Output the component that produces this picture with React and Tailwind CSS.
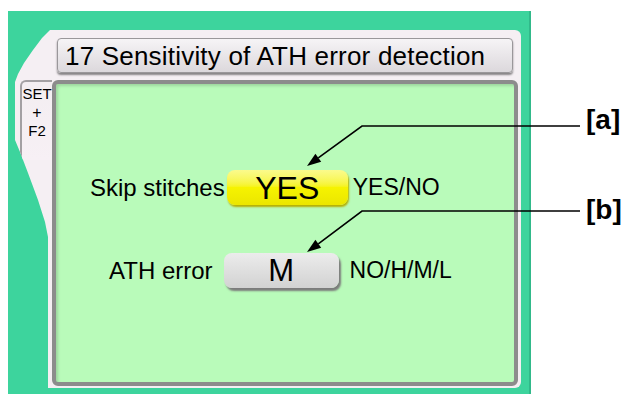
export default function App() {
  return (
    <div className="relative w-[629px] h-[394px] overflow-hidden bg-white pt-[11px] pl-[8px] font-['Liberation_Sans',Arial,sans-serif] text-black">
      {/* teal frame */}
      <div className="flex w-[523px] h-[383px] bg-[#3dd49d] border-r-2 border-[#31b98a] pt-[19px] pl-[7px]">
        {/* left tab */}
        <div className="flex flex-col w-[37px] h-[358px] bg-[#f5eff3] pt-[50px] pl-[5px] [clip-path:polygon(35px_0,37px_0,37px_358px,33px_358px,33px_207px,30px_192px,23px_170px,13px_143px,5px_122px,0_110px,0_52px,3px_44px,9px_33px,18px_20px,27px_8px)]">
          <div className="flex flex-col items-center w-[32px] h-[80px] border-l-2 border-t-2 border-[#a3a0a3] rounded-tl-[6px] pt-[3px] bg-gradient-to-b from-[#f3eef1] to-[#f7f0f5]">
            <span className="text-[15px] leading-[18px]">SET</span>
            <span className="text-[16px] leading-[19px]">+</span>
            <span className="text-[15px] leading-[18px]">F2</span>
          </div>
        </div>

        {/* main panel */}
        <div className="flex flex-col w-[469px] h-[358px] bg-[#f5eff3] rounded-tr-[6px] rounded-br-[6px] pt-[8px]">
          <div className="flex items-center ml-[5px] w-[456px] h-[35px] pl-[7px] rounded-[4px] border border-[#9a979a] bg-gradient-to-b from-[#f6f4f6] to-[#dcd8dc] shadow-[0_2px_2px_rgba(0,0,0,0.45)]">
            <span className="text-[26px] tracking-[0.2px] leading-none whitespace-nowrap">
              17 Sensitivity of ATH error detection
            </span>
          </div>

          <div className="flex flex-col mt-[7px] w-[466px] h-[306px] rounded-[6px] border-[4px] border-[#8c8c8c] bg-[#b9fbba] shadow-[inset_2px_2px_3px_rgba(0,0,0,0.15)]">
            <div className="flex items-center mt-[86px] pl-[34px]">
              <span className="text-[24px] leading-none whitespace-nowrap">Skip stitches</span>
              <div className="flex items-center justify-center ml-[2px] w-[121px] h-[35px] rounded-[8px] bg-gradient-to-b from-[#fbfb8c] via-[#f6f300] to-[#ebe600] shadow-[1px_2px_2px_#b5ae00]">
                <span className="text-[32px] leading-none">YES</span>
              </div>
              <span className="ml-[5px] text-[23px] leading-none">YES/NO</span>
            </div>

            <div className="flex items-center mt-[48px] pl-[53px]">
              <span className="text-[24px] leading-none whitespace-nowrap">ATH error</span>
              <div className="flex items-center justify-center ml-[11px] w-[115px] h-[35px] rounded-[8px] bg-gradient-to-b from-[#ececec] to-[#d2d2d2] shadow-[2px_3px_2px_#7c7c7c]">
                <span className="text-[31px] leading-none">M</span>
              </div>
              <span className="ml-[11px] text-[23px] leading-none">NO/H/M/L</span>
            </div>
          </div>
        </div>
      </div>

      {/* callouts */}
      <svg className="absolute left-0 top-0 pointer-events-none" width="629" height="394" viewBox="0 0 629 394">
        <polyline points="580,126 362,126 318.3,157.8" fill="none" stroke="#000" strokeWidth="1.6" />
        <polygon points="307,166 321.2,161.8 315.4,153.8" fill="#000" />
        <polyline points="580,211 362,211 318.3,243.8" fill="none" stroke="#000" strokeWidth="1.6" />
        <polygon points="307,252 321.2,247.8 315.4,239.8" fill="#000" />
      </svg>
      <span className="absolute left-[586px] top-[106px] text-[28px] font-bold leading-none">[a]</span>
      <span className="absolute left-[586px] top-[196px] text-[28px] font-bold leading-none">[b]</span>
    </div>
  );
}
